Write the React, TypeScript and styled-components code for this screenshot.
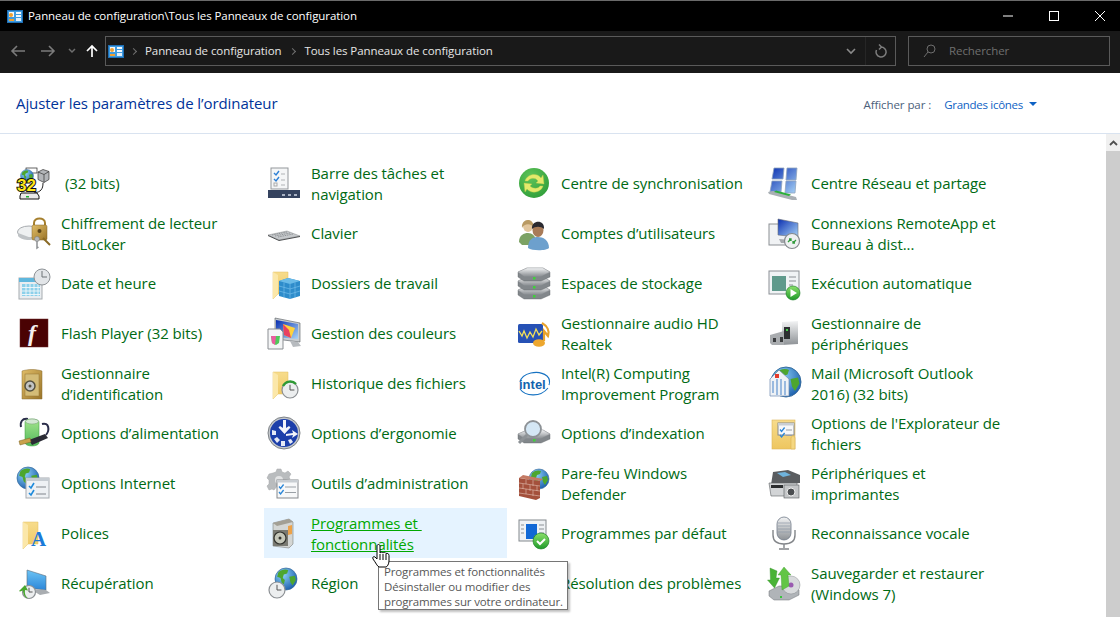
import React, { FC, ReactNode } from 'react';
import styled, { createGlobalStyle } from 'styled-components';

const Global = createGlobalStyle`
	html, body { margin: 0; padding: 0; background: #ffffff; }
	body { font-family: "Open Sans", "Noto Sans", "Liberation Sans", sans-serif; }
`;

const HiddenSvg = styled.svg`
	display: block;
	width: 0;
	height: 0;
`;

const SvgLabel = styled.text`
	font-family: "Liberation Sans", sans-serif;
`;

const BitsText = styled(SvgLabel)`
	paint-order: stroke;
`;

const SerifLabel = styled.text`
	font-family: "Liberation Serif", serif;
`;

const Defs: FC = () => (
	<HiddenSvg aria-hidden="true">
		<defs>
			<linearGradient id="steel" x1="0" y1="0" x2="0" y2="1"><stop offset="0" stopColor="#f2f3f4" /><stop offset="1" stopColor="#8e9296" /></linearGradient>
			<linearGradient id="screen" x1="0" y1="0" x2="1" y2="1"><stop offset="0" stopColor="#0a2fb0" /><stop offset="1" stopColor="#a9d4f7" /></linearGradient>
			<linearGradient id="sky" x1="0" y1="0" x2="0" y2="1"><stop offset="0" stopColor="#6cc4f5" /><stop offset="1" stopColor="#2c86d8" /></linearGradient>
			<linearGradient id="folder" x1="0" y1="0" x2="0" y2="1"><stop offset="0" stopColor="#f7dc8c" /><stop offset="1" stopColor="#eec65f" /></linearGradient>
			<linearGradient id="gold" x1="0" y1="0" x2="1" y2="1"><stop offset="0" stopColor="#e0bd68" /><stop offset="1" stopColor="#9a7428" /></linearGradient>
			<linearGradient id="green" x1="0" y1="0" x2="0" y2="1"><stop offset="0" stopColor="#8be06a" /><stop offset="1" stopColor="#1f9a2a" /></linearGradient>
			<linearGradient id="battery" x1="0" y1="0" x2="0" y2="1"><stop offset="0" stopColor="#a4e58c" /><stop offset="1" stopColor="#52b95c" /></linearGradient>
			<radialGradient id="ocean" cx=".35" cy=".3" r=".8"><stop offset="0" stopColor="#8fd4f8" /><stop offset="1" stopColor="#1557a8" /></radialGradient>
			<radialGradient id="ball" cx=".4" cy=".3" r=".8"><stop offset="0" stopColor="#5fc45a" /><stop offset="1" stopColor="#2d9c38" /></radialGradient>
		</defs>
	</HiddenSvg>
);

/* small shared drawings, all in the 36x36 icon box */
const Globe: FC<{ x: number; y: number; r: number }> = ({ x, y, r }) => (
	<g transform={`translate(${x} ${y}) scale(${r / 10})`}>
		<circle r="10" fill="url(#ocean)" stroke="#2f6597" strokeWidth=".6" />
		<path d="M-7-6c3-3 7-3 9-2l-1 3-3 1-1 3 2 2-1 4-2-2-1-4-3-1zM3-2l5-1 1 4-3 5-2-3z" fill="#4da62e" />
	</g>
);
const Clock: FC<{ x: number; y: number; r: number }> = ({ x, y, r }) => (
	<g>
		<circle cx={x} cy={y} r={r} fill="#eceeef" stroke="#8b8f93" strokeWidth="1.2" />
		<path d={`M${x} ${y - r * 0.65}V${y}H${x + r * 0.55}`} fill="none" stroke="#555" strokeWidth="1" />
	</g>
);
const FolderPage: FC = () => (
	<g>
		<path d="M7 7h15v22H12l-5 5z" fill="url(#folder)" stroke="#e0bc62" strokeWidth=".5" />
		<path d="M7 7l5 3v19l-5 5z" fill="#fbe7a9" />
	</g>
);
const CheckList: FC<{ x: number; y: number; w: number; h: number }> = ({ x, y, w, h }) => (
	<g>
		<rect x={x} y={y} width={w} height={h} fill="#f7f8f9" stroke="#85898d" />
		<rect x={x} y={y} width={w} height="2.5" fill="#c9ced3" />
		<path d={`M${x + 2} ${y + 6.5}l1.6 2 3-4M${x + 2} ${y + 12}l1.6 2 3-4`} fill="none" stroke="#2a86d8" strokeWidth="1.3" />
		<path d={`M${x + 8} ${y + 7}h${w - 10}M${x + 8} ${y + 12.5}h${w - 10}`} stroke="#9aa0a6" />
	</g>
);
const Badge: FC<{ x: number; y: number; r: number; play?: boolean }> = ({ x, y, r, play }) => (
	<g>
		<circle cx={x} cy={y} r={r} fill="url(#green)" stroke="#127a1f" strokeWidth=".6" />
		{play
			? <path d={`M${x - 2.5} ${y - 4}l6.5 4-6.5 4z`} fill="#fff" />
			: <path d={`M${x - 4} ${y}l3 3 5-5`} fill="none" stroke="#fff" strokeWidth="2" />}
	</g>
);
const Disk: FC<{ y: number }> = ({ y }) => (
	<g>
		<path d={`M2 ${y + 4}l9-4h16l7 4v5l-9 4H8l-6-4z`} fill="#82878b" stroke="#62676b" strokeWidth=".4" />
		<path d={`M2 ${y + 4}l9-4h16l7 4-9 4H8z`} fill="url(#steel)" stroke="#9ea2a6" strokeWidth=".4" />
		<rect x="17" y={y + 9} width="2.5" height="2.5" fill="#3fd13a" />
	</g>
);

const ICONS: Record<string, ReactNode> = {
	bits: (
		<>
			<rect x="10" y="3" width="11" height="5" fill="#fff" stroke="#222" strokeWidth=".7" />
			<Globe x={11} y={11} r={6.5} />
			<path d="M22 7l5-2.500 6 2v8l-5 3-6-3z" fill="#b3b6b9" stroke="#333" strokeWidth=".7" />
			<path d="M22 7l6 2.500 5-3M28 9.500v8" fill="none" stroke="#333" strokeWidth=".7" />
			<path d="M27 18c0 6-2 9-9 10" fill="none" stroke="#222" />
			<path d="M5 28h16l2 3v3H4v-3z" fill="#e8e8e8" stroke="#111" />
			<rect x="10" y="31" width="3" height="1.500" fill="#20b030" />
			<BitsText x="1" y="26" fontSize="17" fontWeight="700" fill="#ffe81a" stroke="#111" strokeWidth="2">32</BitsText>
		</>
	),
	bitlocker: (
		<>
			<ellipse cx="13" cy="17" rx="11.500" ry="6" fill="#eef0f1" stroke="#a7abaf" />
			<path d="M2 18v3c3 4 12 5 16 3" fill="#bfc3c6" />
			<path d="M18 11V8c0-6 11-6 11 0v3" fill="none" stroke="#a57f2d" strokeWidth="2" />
			<rect x="16" y="10" width="15" height="15" rx="1.500" fill="url(#gold)" stroke="#85652a" strokeWidth=".5" />
			<circle cx="23.500" cy="16" r="2" fill="#5c4518" />
			<circle cx="21" cy="24" r="2.500" fill="#b6b8ba" stroke="#777" strokeWidth=".5" />
			<path d="M21 26v7l1.500-1" stroke="#8d9093" strokeWidth="1.500" fill="none" />
			<path d="M27 23l7 7" stroke="#8a6a25" strokeWidth="2" />
		</>
	),
	date: (
		<>
			<rect x="3" y="13" width="23" height="21" fill="#e9edf0" stroke="#a6abb0" />
			<rect x="3" y="13" width="23" height="4" fill="#5fb7dd" />
			<path d="M6 19h18v12H6z" fill="#8cd0ea" />
			<path d="M6 22.500h18M6 26h18M6 29.500h18M10 19v12M14 19v12M18 19v12M22 19v12" stroke="#f3f8fa" strokeWidth=".9" />
			<circle cx="26" cy="12" r="8" fill="#e2e5e8" stroke="#8e9397" />
			<path d="M26 6v6h5" fill="none" stroke="#6d7277" strokeWidth="1" />
		</>
	),
	flash: (
		<>
			<rect x="4" y="4" width="28" height="28" fill="#4a0203" stroke="#6d2a2a" strokeWidth=".5" />
			<SerifLabel x="12" y="26" fontSize="24" fontStyle="italic" fontWeight="700" fill="#f4eeee">f</SerifLabel>
		</>
	),
	safe: (
		<>
			<path d="M6 6c6-2 14-2 20 0v28H6z" fill="url(#gold)" stroke="#8a6d32" strokeWidth=".5" />
			<rect x="9" y="9" width="14" height="22" fill="#d4bc77" stroke="#947535" strokeWidth=".5" />
			<circle cx="14" cy="21" r="5" fill="#c2c4c4" stroke="#54503f" strokeWidth="1.500" />
			<circle cx="14" cy="21" r="1.500" fill="#54503f" />
		</>
	),
	power: (
		<>
			<path d="M12 4c-6-1-8 3-7 8M26 9c7-2 8 6 4 11" fill="none" stroke="#2b2d4a" strokeWidth="2" />
			<path d="M9 7c0-4 14-4 14 0v21c-1 4-13 4-14 0z" fill="url(#battery)" stroke="#3a9a3a" strokeWidth=".5" />
			<ellipse cx="16" cy="6.500" rx="6.500" ry="2.500" fill="#d3e8d3" stroke="#7a9a7a" strokeWidth=".5" />
			<path d="M13 25l16-6 3 4-16 7z" fill="#2a2b35" />
			<path d="M3 26l11-3 1 4-11 3z" fill="#c9a24b" stroke="#7b6120" strokeWidth=".5" />
		</>
	),
	internet: (
		<>
			<Globe x={12} y={13} r={11} />
			<rect x="10" y="13" width="23" height="20" fill="#eef1f4" stroke="#a5aab0" />
			<rect x="10" y="13" width="23" height="3" fill="#c6ccd2" />
			<path d="M13 21l2 2 3-5M13 28l2 2 3-5" fill="none" stroke="#1e8adb" strokeWidth="1.600" />
			<path d="M20 22h10M20 29h10" stroke="#80868c" strokeWidth="1.200" />
		</>
	),
	fonts: (
		<>
			<FolderPage />
			<SerifLabel x="15" y="31" fontSize="21" fontWeight="700" fill="#1b7ad8">A</SerifLabel>
		</>
	),
	recovery: (
		<>
			<path d="M11 5l19 6v14l-19-2z" fill="url(#sky)" stroke="#5c6c7a" strokeWidth=".6" />
			<path d="M14 24l16 1 4 3-10 2z" fill="#a9adb1" />
			<Clock x={13} y={27} r={6.500} />
			<path d="M9 20l-6 6 1 .5 3-1c0 4 2 7 5 8-4-4-3-7-3-8.500l3 .5z" fill="#49a72e" />
		</>
	),
	taskbar: (
		<>
			<rect x="5" y="3" width="17" height="21" fill="#f5f6f7" stroke="#93979b" />
			<path d="M8 8l2 2 3-4M8 14l2 2 3-4" fill="none" stroke="#2d80d6" strokeWidth="1.400" />
			<rect x="8" y="18" width="3" height="3" fill="none" stroke="#aaa" />
			<path d="M15 9h4M15 15h4M15 20h4" stroke="#b0b3b6" />
			<rect x="2" y="25" width="32" height="8" fill="#35435f" />
			<path d="M16 29h3v2h-3zM22 29h3v2h-3zM28 29h3v2h-3z" fill="#aab3c4" />
		</>
	),
	keyboard: (
		<>
			<path d="M2 20l19-4 13 5-21 4z" fill="#c5c8cb" stroke="#6f7275" strokeWidth=".4" />
			<path d="M6 20l15-3M9 21l15-3M12 22l15-3" stroke="#7b7f83" strokeWidth=".7" strokeDasharray="1.500 .8" />
			<path d="M2 20.500l11 5 21-4" fill="none" stroke="#3d3f42" strokeWidth=".9" />
		</>
	),
	workfolder: (
		<>
			<FolderPage />
			<path d="M22 13l12 3v15l-10 3-11-3V16z" fill="#2e8ccb" />
			<path d="M13 16l11 3 10-3-12-3z" fill="#6bbbe8" />
			<path d="M24 19v15M13 21l11 3 10-3M13 26l11 3 10-3M18 17.500v15M29 17.500v15" stroke="#7cc5ee" strokeWidth=".6" fill="none" />
		</>
	),
	color: (
		<>
			<path d="M9 3l25 5v19l-25-3z" fill="#c8ccd0" stroke="#555a60" strokeWidth=".6" />
			<path d="M10 5l22 4v15l-22-2z" fill="url(#screen)" />
			<path d="M17 9l12 4-4 10-7-3z" fill="#ffd23c" />
			<path d="M17 9l6 6 2 8-7-3z" fill="#e84060" />
			<path d="M24 26l8 1 3 4-8 1z" fill="#b7bbbf" />
			<path d="M2 14h12l3 3v17H2z" fill="#f4f5f6" stroke="#8b8f93" />
			<path d="M5 21h9l-1 7-3 2-4-2z" fill="#4fc95a" />
			<path d="M5 21h5l-1 9-3-2z" fill="#ec5aa0" />
		</>
	),
	history: (
		<>
			<FolderPage />
			<Clock x={24} y={25} r={8} />
			<path d="M17 21a8 8 0 0 1 13-2" fill="none" stroke="#2f9a35" strokeWidth="2.400" />
		</>
	),
	ergonomy: (
		<>
			<circle cx="18" cy="18" r="16" fill="#c3c7cb" stroke="#7f8488" />
			<circle cx="18" cy="18" r="14" fill="#1c3faa" />
			<path d="M17 5h3v8l3-2 1.500 1.500L18.500 19l-6-6.500L14 11l3 2z" fill="#f3f5fa" />
			<path d="M20 19l7-1-1-3 6 4-6 4 1-3-7 1z" fill="#f3f5fa" />
			<path d="M6 15l4 1 0 4-4 0zM8 24l3-2 3 3-3 3zM15 26l4 0 0 5-4 0zM22 25l3-1 2 3-3 2z" fill="#e6eaf6" />
		</>
	),
	admin: (
		<>
			<path d="M7 8l3-1 1-3h4l1 3 3 1 3-2 3 3-2 3 1 2-8 1-8 10-2-1-3 1-2-4 2-2v-4l-2-2 2-4z" fill="#b9bcbe" stroke="#a4a7a9" strokeWidth=".5" />
			<circle cx="13" cy="15" r="4" fill="#e3e4e5" />
			<CheckList x={11} y={15} w={21} h={18} />
		</>
	),
	programs: (
		<>
			<path d="M7 8l16-4 4 3v22l-4 4-16-2z" fill="#d4d6d4" stroke="#6a6c6a" strokeWidth=".5" />
			<path d="M7 8l16-4 4 3-16 4z" fill="#a39f94" />
			<path d="M22 11l4-1v9l-4 1z" fill="#eda249" />
			<rect x="7" y="15" width="15" height="16" fill="#7a7a72" />
			<circle cx="14" cy="23" r="6" fill="#c4c6b8" stroke="#33342f" strokeWidth="1.200" />
			<circle cx="14" cy="23" r="1.500" fill="#33342f" />
		</>
	),
	region: (
		<>
			<Globe x={20} y={14} r={11} />
			<Clock x={11} y={25} r={8} />
		</>
	),
	sync: (
		<>
			<circle cx="18" cy="18" r="15" fill="url(#ball)" />
			<path d="M9 16c2-7 12-9 16-3l2-3 1 9-8-1 2-2c-3-4-8-3-10 0zM27 21c-2 7-12 8-16 3l-2 3-1-9 8 1-2 2c3 3 8 3 10 0z" fill="#e4e96c" stroke="#b9cc45" strokeWidth=".4" />
		</>
	),
	users: (
		<>
			<path d="M3 27c0-7 5-9 9-9s8 3 8 9l-5 3H6z" fill="#7ca264" />
			<ellipse cx="12" cy="11" rx="5" ry="6" fill="#e2c69d" />
			<path d="M6 13c-1-10 12-11 12 0-2-5-10-5-12 0z" fill="#b99a63" />
			<path d="M12 33c0-9 5-11 10-11s11 3 11 11c-3 3-17 3-21 0z" fill="#6da0cd" />
			<ellipse cx="22" cy="15" rx="5.500" ry="7" fill="#a87b58" />
			<path d="M16 14c-1-9 13-10 12 0-3-3-9-3-12 0z" fill="#2a2a30" />
		</>
	),
	storage: (
		<>
			<Disk y={21} />
			<Disk y={12} />
			<Disk y={3} />
		</>
	),
	audio: (
		<>
			<rect x="2" y="9" width="25" height="19" rx="1.500" fill="#2651b5" />
			<path d="M3 16l3 5 2-5 3 7 3-6 3 5 3-8 3 6 3-4" fill="none" stroke="#f3e05a" strokeWidth="1.300" />
			<path d="M26 8c5 3 8 8 6 13l-4-5v10" fill="none" stroke="#eaa32c" strokeWidth="2.200" />
			<ellipse cx="23" cy="28" rx="6" ry="3.800" fill="#eda72f" />
		</>
	),
	intel: (
		<>
			<path d="M4 17C6 8 22 4 31 11c3 3 3 6 2 9M4 24c5 7 20 9 28-1" fill="none" stroke="#1672c2" strokeWidth="1.100" />
			<SvgLabel x="3" y="24" fontSize="13" fontWeight="700" fill="#1263ae">intel</SvgLabel>
		</>
	),
	indexing: (
		<>
			<Disk y={15} />
			<circle cx="17" cy="14" r="8" fill="#d4e7f5" stroke="#8d9296" strokeWidth="1.800" />
			<path d="M11 20l-8 8" stroke="#8d9296" strokeWidth="3" />
		</>
	),
	firewall: (
		<>
			<Globe x={23} y={14} r={10} />
			<path d="M3 13l21 3v17l-4 2-17-4z" fill="#a4503c" />
			<path d="M3 13l4-3 20 4-3 2z" fill="#c47a64" />
			<path d="M3 18l21 3M3 23l21 3M3 28l21 3M10 14v5M17 15v6M7 19v5M14 20v6M21 21v5M10 24v5M17 25v6" stroke="#e3c1b3" strokeWidth=".6" fill="none" />
		</>
	),
	defaults: (
		<>
			<rect x="3" y="5" width="27" height="21" fill="#eef1f4" stroke="#84898e" />
			<rect x="10" y="9" width="11" height="15" fill="#1168d6" />
			<path d="M5 10h3M5 14h3M5 18h3M23 10h5M23 14h5M23 18h5" stroke="#8b9095" />
			<Badge x={25} y={26} r={8} />
		</>
	),
	trouble: (
		<>
			<path d="M8 4l20 3v24l-20-3z" fill="#1e6cc8" />
		</>
	),
	network: (
		<>
			<path d="M8 3h10l-1 11H6zM21 3h10l-1 12H20zM6 16h10l-1 11H4zM20 16h10l-1 12H19z" fill="url(#screen)" stroke="#8fa3bd" strokeWidth=".8" />
			<path d="M2 27l5-1 23 6 1 3-5 0-23-6z" fill="#aab0b5" />
			<path d="M8 27l15 4 2-1.500-15-4z" fill="#2cb03a" />
		</>
	),
	remote: (
		<>
			<rect x="3" y="9" width="20" height="21" fill="#f0f2f4" stroke="#8b8f94" />
			<path d="M12 4l20 4v14l-20-2z" fill="url(#screen)" stroke="#6b7077" strokeWidth=".6" />
			<path d="M13 24l12 1 4 3-14 0z" fill="#a5a9ad" />
			<circle cx="26" cy="26" r="7.500" fill="#eef0f1" stroke="#85898d" strokeWidth="1.200" />
			<path d="M22 27l3-3M23 24h2v2M30 25l-3 3M29 28h-2v-2" stroke="#2f9a3a" strokeWidth="1.300" fill="none" />
		</>
	),
	autoplay: (
		<>
			<rect x="3" y="6" width="30" height="23" fill="#f0f3f5" stroke="#8b9095" />
			<rect x="6" y="11" width="14" height="15" fill="#5f9a8c" />
			<path d="M23 12h7M23 16h7M23 20h4" stroke="#8b9095" />
			<Badge x={27} y={28} r={7} play />
		</>
	),
	devices: (
		<>
			<path d="M16 7l16-1v23l-16 1z" fill="url(#steel)" />
			<rect x="18" y="12" width="6" height="12" fill="#2d2f31" />
			<rect x="20" y="14" width="2" height="2" fill="#44d04a" />
			<path d="M4 20l14-4v14H6l-2-2z" fill="#a9acaf" />
			<path d="M7 23h3v4H7zM14 22h3v5h-3z" fill="#3a3c3e" />
		</>
	),
	mail: (
		<>
			<Globe x={20} y={17} r={15} />
			<path d="M4 14l9-9 10 9v17H4z" fill="#eef2f6" stroke="#6a87b0" strokeWidth=".7" />
			<path d="M7 16v12M11 14v16M15 14v16M19 16v14" stroke="#6d9bd3" strokeWidth="1.300" />
			<rect x="9" y="9" width="4" height="4" fill="#e43a2a" />
		</>
	),
	explorer: (
		<>
			<rect x="6" y="5" width="23" height="29" fill="url(#folder)" stroke="#dcb65a" strokeWidth=".6" />
			<CheckList x={12} y={8} w={16} h={12} />
			<path d="M25 34V23c1-3 3-3 4 0v11z" fill="#f5d781" stroke="#d8b257" strokeWidth=".6" />
		</>
	),
	printers: (
		<>
			<path d="M7 7l15-2 12 5v8L5 20z" fill="#5a5d60" />
			<path d="M11 8l8-1 6 3-8 2z" fill="#6fb3dc" />
			<path d="M3 18l28 0v10l-10 3H5z" fill="#d2d4d6" stroke="#5b5e61" strokeWidth=".6" />
			<rect x="5" y="20" width="12" height="3" fill="#2a2c2e" />
			<rect x="18" y="20" width="15" height="13" fill="#c4c6c8" stroke="#585b5e" strokeWidth=".6" />
			<circle cx="25" cy="27" r="4" fill="#4b4e51" stroke="#eee" />
		</>
	),
	mic: (
		<>
			<rect x="11" y="2" width="14" height="23" rx="7" fill="url(#steel)" stroke="#707a88" strokeWidth=".8" />
			<path d="M12 8h12M12 11h12M12 14h12M12 17h12" stroke="#8e98a8" strokeWidth=".7" />
			<path d="M7 15v5c0 7 5 9 11 9s11-2 11-9v-5M18 29v4M13 34h10" fill="none" stroke="#828589" strokeWidth="1.400" />
		</>
	),
	backup: (
		<>
			<path d="M3 26l10-5h14l6 4v5l-10 5H8l-5-4z" fill="#b0b4b8" stroke="#6f7377" strokeWidth=".5" />
			<circle cx="25" cy="20" r="9" fill="#d8dadc" stroke="#8b8f93" strokeWidth=".5" />
			<circle cx="25" cy="20" r="2.500" fill="#9a5ab0" />
			<rect x="14" y="31" width="2" height="2" fill="#37c43a" />
			<path d="M4 3l7 3-1 7 3.500 0-5 10-7-8 3 0z" fill="#49b336" stroke="#35902a" strokeWidth=".4" />
			<path d="M18 2l7 8-3 0 1 11-7 4-1-15-3 0z" fill="#62c545" stroke="#3c9a2d" strokeWidth=".4" />
		</>
	),
};

type Item = { icon: string; lines: string[]; shifted?: boolean; hover?: boolean };

const COLUMNS: Item[][] = [
	[
		{ icon: 'bits', lines: ['(32 bits)'], shifted: true },
		{ icon: 'bitlocker', lines: ['Chiffrement de lecteur', 'BitLocker'] },
		{ icon: 'date', lines: ['Date et heure'] },
		{ icon: 'flash', lines: ['Flash Player (32 bits)'] },
		{ icon: 'safe', lines: ['Gestionnaire', 'd’identification'] },
		{ icon: 'power', lines: ['Options d’alimentation'] },
		{ icon: 'internet', lines: ['Options Internet'] },
		{ icon: 'fonts', lines: ['Polices'] },
		{ icon: 'recovery', lines: ['Récupération'] },
	],
	[
		{ icon: 'taskbar', lines: ['Barre des tâches et', 'navigation'] },
		{ icon: 'keyboard', lines: ['Clavier'] },
		{ icon: 'workfolder', lines: ['Dossiers de travail'] },
		{ icon: 'color', lines: ['Gestion des couleurs'] },
		{ icon: 'history', lines: ['Historique des fichiers'] },
		{ icon: 'ergonomy', lines: ['Options d’ergonomie'] },
		{ icon: 'admin', lines: ['Outils d’administration'] },
		{ icon: 'programs', lines: ['Programmes et ', 'fonctionnalités'], hover: true },
		{ icon: 'region', lines: ['Région'] },
	],
	[
		{ icon: 'sync', lines: ['Centre de synchronisation'] },
		{ icon: 'users', lines: ['Comptes d’utilisateurs'] },
		{ icon: 'storage', lines: ['Espaces de stockage'] },
		{ icon: 'audio', lines: ['Gestionnaire audio HD', 'Realtek'] },
		{ icon: 'intel', lines: ['Intel(R) Computing', 'Improvement Program'] },
		{ icon: 'indexing', lines: ['Options d’indexation'] },
		{ icon: 'firewall', lines: ['Pare-feu Windows', 'Defender'] },
		{ icon: 'defaults', lines: ['Programmes par défaut'] },
		{ icon: 'trouble', lines: ['Résolution des problèmes'] },
	],
	[
		{ icon: 'network', lines: ['Centre Réseau et partage'] },
		{ icon: 'remote', lines: ['Connexions RemoteApp et', 'Bureau à dist...'] },
		{ icon: 'autoplay', lines: ['Exécution automatique'] },
		{ icon: 'devices', lines: ['Gestionnaire de', 'périphériques'] },
		{ icon: 'mail', lines: ['Mail (Microsoft Outlook', '2016) (32 bits)'] },
		{ icon: 'explorer', lines: ["Options de l'Explorateur de", 'fichiers'] },
		{ icon: 'printers', lines: ['Périphériques et', 'imprimantes'] },
		{ icon: 'mic', lines: ['Reconnaissance vocale'] },
		{ icon: 'backup', lines: ['Sauvegarder et restaurer', '(Windows 7)'] },
	],
];

const ControlPanelIcon: FC = () => (
	<svg width="16" height="13" viewBox="0 0 16 13">
		<rect x=".5" y=".5" width="15" height="12" fill="#3f9be0" stroke="#1f6fb5" />
		<rect x="2" y="2" width="5" height="5" fill="#f3f8fc" />
		<rect x="9" y="2" width="5" height="2" fill="#f3f8fc" />
		<rect x="9" y="5" width="5" height="2" fill="#f3f8fc" />
		<rect x="9" y="8" width="5" height="3" fill="#dfeefa" />
		<circle cx="4" cy="5" r="2" fill="#f0a030" />
		<rect x="2" y="9" width="5" height="2" fill="#f0a030" />
	</svg>
);

export default function App() {
	return (
		<Window>
			<Global />
			<Defs />
			<TitleBar>
				<ControlPanelIcon />
				<TitleText>Panneau de configuration\Tous les Panneaux de configuration</TitleText>
				<WindowButtons>
					<svg width="12" height="12" viewBox="0 0 12 12"><path d="M1 6h10" stroke="#fff" /></svg>
					<svg width="12" height="12" viewBox="0 0 12 12"><rect x="1.500" y="1.500" width="9" height="9" fill="none" stroke="#fff" /></svg>
					<svg width="12" height="12" viewBox="0 0 12 12"><path d="M1 1l10 10M11 1L1 11" stroke="#fff" /></svg>
				</WindowButtons>
			</TitleBar>
			<Toolbar>
				<NavButtons>
					<svg width="16" height="14" viewBox="0 0 16 14"><path d="M15 7H2M7 2L2 7l5 5" fill="none" stroke="#7b7b7b" strokeWidth="1.600" /></svg>
					<svg width="16" height="14" viewBox="0 0 16 14"><path d="M1 7h13M9 2l5 5-5 5" fill="none" stroke="#7b7b7b" strokeWidth="1.600" /></svg>
					<svg width="8" height="6" viewBox="0 0 8 6"><path d="M1 1l3 3 3-3" fill="none" stroke="#6e6e6e" strokeWidth="1.500" /></svg>
					<svg width="14" height="14" viewBox="0 0 14 14"><path d="M7 13V2M2 7l5-5 5 5" fill="none" stroke="#fff" strokeWidth="1.700" /></svg>
				</NavButtons>
				<AddressBox>
					<ControlPanelIcon />
					<Crumb>Panneau de configuration</Crumb>
					<Crumb>Tous les Panneaux de configuration</Crumb>
					<AddressEnd>
						<svg width="10" height="7" viewBox="0 0 10 7"><path d="M1 1l4 4 4-4" fill="none" stroke="#8a8a8a" strokeWidth="1.600" /></svg>
						<RefreshCell>
							<svg width="12" height="14" viewBox="0 0 12 14"><path d="M6 3a5 5 0 1 1-4.500 3M4 .5L6.500 3 4 5.500" fill="none" stroke="#7d7d7d" strokeWidth="1.500" /></svg>
						</RefreshCell>
					</AddressEnd>
				</AddressBox>
				<SearchBox>
					<svg width="13" height="14" viewBox="0 0 13 14"><circle cx="8" cy="5" r="4" fill="none" stroke="#6e6e6e" /><path d="M5 8l-4 5" stroke="#6e6e6e" /></svg>
					<SearchText>Rechercher</SearchText>
				</SearchBox>
			</Toolbar>
			<Header>
				<Heading>Ajuster les paramètres de l’ordinateur</Heading>
				<ViewBy>
					<ViewLabel>Afficher par :</ViewLabel>
					<ViewValue>Grandes icônes</ViewValue>
					<Caret />
				</ViewBy>
			</Header>
			<Content>
				<ItemGrid>
					{COLUMNS.map((col, c) => (
						<Column key={c}>
							{col.map(item => (
								<Row key={item.icon} $hover={item.hover}>
									<IconBox viewBox="0 0 36 36">{ICONS[item.icon]}</IconBox>
									<RowText $shifted={item.shifted} $hover={item.hover}>
										{item.lines.map(l => <RowLine key={l}><span>{l}</span></RowLine>)}
									</RowText>
								</Row>
							))}
						</Column>
					))}
				</ItemGrid>
				<ScrollBar>
					<ScrollUp>
						<svg width="9" height="6" viewBox="0 0 9 6"><path d="M1 5l3.500-3.500L8 5" fill="none" stroke="#505050" strokeWidth="1.800" /></svg>
					</ScrollUp>
				</ScrollBar>
			</Content>
			<Tooltip>
				<div>Programmes et fonctionnalités</div>
				<div>Désinstaller ou modifier des</div>
				<div>programmes sur votre ordinateur.</div>
			</Tooltip>
			<HandCursor viewBox="0 0 18 24">
				<path d="M5 2c0-2 3-2 3 0v7c1-1 2-1 3 0 1-1 2-1 3 .5 1-.5 3 0 3 2V17c0 3-2 6-3 6H7c-2-1-3-4-6-8-1-2 1-3 2-2l2 2z" fill="#fff" stroke="#000" />
				<path d="M8 10v6M11 10v6M14 10v6" stroke="#000" />
			</HandCursor>
		</Window>
	);
}

const Window = styled.div`
	position: relative;
	display: flex;
	flex-direction: column;
	width: 1120px;
	height: 617px;
	overflow: hidden;
	background: #ffffff;
`;

const TitleBar = styled.div`
	display: flex;
	align-items: center;
	height: 30px;
	padding-left: 7px;
	background: #000000;
	border-top: 1px solid #6a6a6a;
`;

const TitleText = styled.span`
	margin-left: 5px;
	padding-bottom: 2px;
	font-size: 11.5px;
	letter-spacing: -0.08px;
	color: #ffffff;
	white-space: nowrap;
`;

const WindowButtons = styled.div`
	display: flex;
	gap: 34px;
	margin-left: auto;
	margin-right: 14px;
`;

const Toolbar = styled.div`
	display: flex;
	align-items: flex-start;
	height: 42px;
	padding-top: 5px;
	box-sizing: border-box;
	background: #191919;
`;

const NavButtons = styled.div`
	display: flex;
	align-items: center;
	width: 105px;
	height: 30px;
	padding-left: 10px;
	gap: 14px;
	box-sizing: border-box;
	svg:nth-child(3) { margin-left: -2px; }
	svg:nth-child(4) { margin-left: -5px; }
`;

const AddressBox = styled.div`
	display: flex;
	align-items: center;
	width: 791px;
	height: 30px;
	padding-left: 2px;
	box-sizing: border-box;
	border: 1px solid #5a5a5a;
`;

const Crumb = styled.span`
	position: relative;
	margin-left: 21px;
	padding-bottom: 2px;
	font-size: 11.5px;
	letter-spacing: -0.08px;
	color: #e6e6e6;
	white-space: nowrap;
	& + & { margin-left: 23px; }
	&::before {
		content: '';
		position: absolute;
		left: -14px;
		top: 6px;
		width: 4px;
		height: 4px;
		border-top: 1.5px solid #707070;
		border-right: 1.5px solid #707070;
		transform: rotate(45deg);
	}
`;

const AddressEnd = styled.div`
	display: flex;
	align-items: center;
	margin-left: auto;
	height: 100%;
	gap: 9px;
`;

const RefreshCell = styled.div`
	display: flex;
	align-items: center;
	justify-content: center;
	width: 29px;
	height: 100%;
	border-left: 1px solid #262626;
`;

const SearchBox = styled.div`
	display: flex;
	align-items: center;
	width: 202px;
	height: 30px;
	margin-left: 12px;
	padding-left: 14px;
	box-sizing: border-box;
	border: 1px solid #5a5a5a;
`;

const SearchText = styled.span`
	margin-left: 13px;
	padding-bottom: 2px;
	font-size: 11.5px;
	letter-spacing: -0.08px;
	color: #6f6f6f;
`;

const Header = styled.div`
	display: flex;
	align-items: center;
	justify-content: space-between;
	height: 60px;
	padding: 0 83px 0 16px;
	border-bottom: 1px solid #d9e3f0;
`;

const Heading = styled.h1`
	margin: 0;
	font-size: 15px;
	font-weight: 400;
	letter-spacing: -0.08px;
	color: #003399;
	white-space: nowrap;
`;

const ViewBy = styled.div`
	display: flex;
	align-items: center;
	padding-top: 2px;
	font-size: 11.5px;
	letter-spacing: -0.08px;
	white-space: nowrap;
`;

const ViewLabel = styled.span`
	color: #4c607a;
`;

const ViewValue = styled.span`
	margin-left: 13px;
	letter-spacing: -0.28px;
	color: #0e62c4;
`;

const Caret = styled.i`
	margin-left: 6px;
	border-left: 4px solid transparent;
	border-right: 4px solid transparent;
	border-top: 4px solid #0e62c4;
`;

const Content = styled.div`
	flex: 1;
	display: flex;
	min-height: 0;
`;

const ItemGrid = styled.div`
	flex: 1;
	display: grid;
	grid-template-columns: repeat(4, 243px);
	column-gap: 7px;
	align-content: start;
	padding: 24px 0 0 14px;
	overflow: hidden;
`;

const Column = styled.div`
	display: flex;
	flex-direction: column;
`;

const Row = styled.div<{ $hover?: boolean }>`
	display: flex;
	align-items: center;
	flex: none;
	height: 50px;
	padding-left: 2px;
	background: ${p => (p.$hover ? '#e5f3ff' : 'transparent')};
`;

const IconBox = styled.svg`
	flex: none;
	width: 36px;
	height: 36px;
`;

const RowText = styled.div<{ $shifted?: boolean; $hover?: boolean }>`
	margin-left: ${p => (p.$shifted ? '13px' : '9px')};
	padding-top: 1px;
	font-size: 15px;
	line-height: 21px;
	letter-spacing: -0.07px;
	color: ${p => (p.$hover ? '#00a800' : '#006a14')};
	text-decoration: ${p => (p.$hover ? 'underline' : 'none')};
`;

const RowLine = styled.div`
	white-space: pre;
`;

const ScrollBar = styled.div`
	flex: none;
	width: 14px;
	background: #cdcdcd;
`;

const ScrollUp = styled.div`
	display: flex;
	align-items: center;
	justify-content: center;
	height: 17px;
	background: #f0f0f0;
`;

const Tooltip = styled.div`
	position: absolute;
	left: 378px;
	top: 561px;
	width: 190px;
	height: 49px;
	box-sizing: border-box;
	padding: 2px 5px;
	font-size: 11.5px;
	letter-spacing: -0.15px;
	line-height: 15px;
	color: #575757;
	white-space: nowrap;
	background: #ffffff;
	border: 1px solid #767676;
	box-shadow: 2px 2px 2px rgba(0, 0, 0, 0.25);
`;

const HandCursor = styled.svg`
	position: absolute;
	left: 372px;
	top: 544px;
	width: 18px;
	height: 24px;
`;
